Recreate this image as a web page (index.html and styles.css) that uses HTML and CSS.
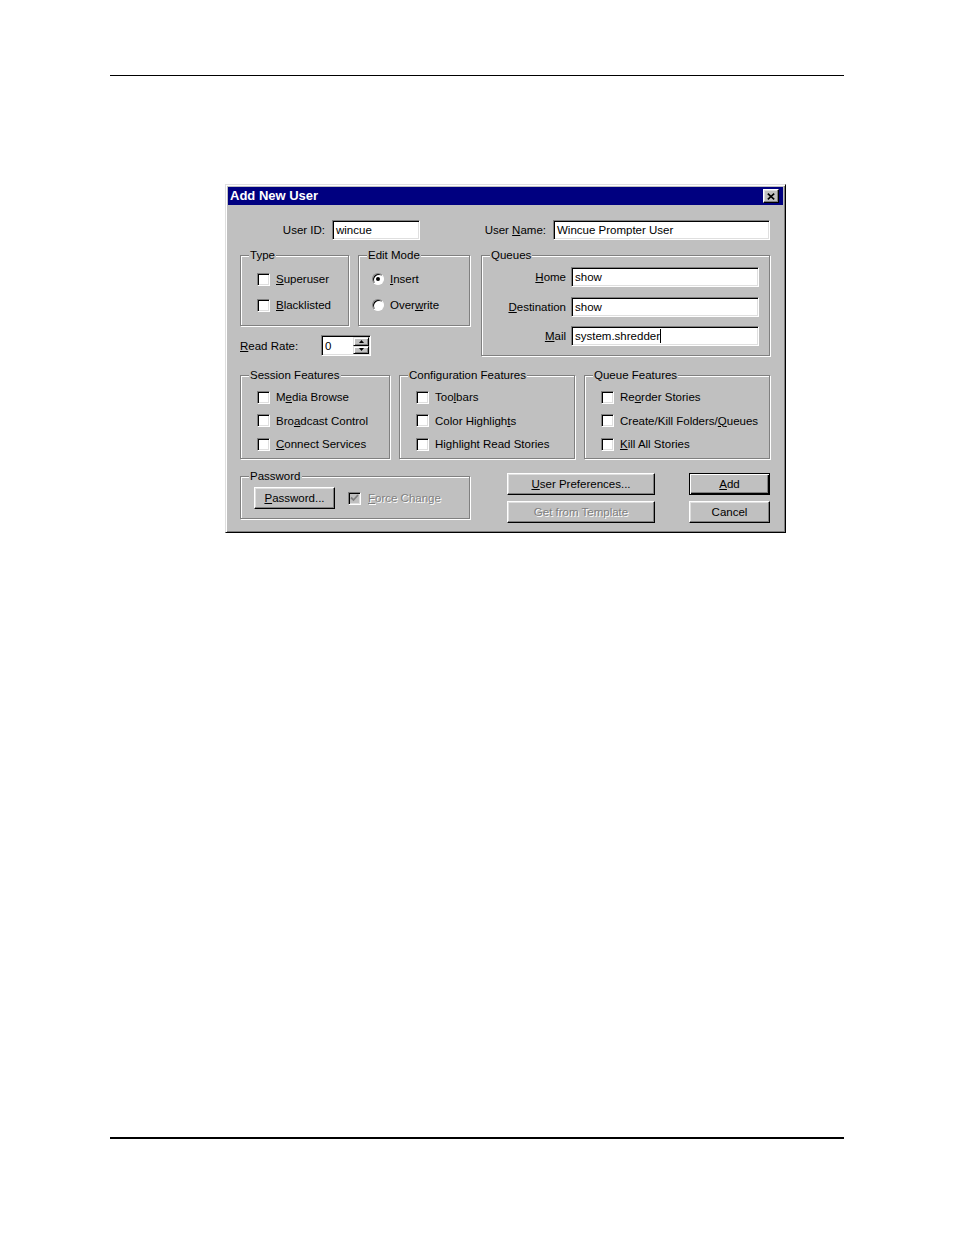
FILE: index.html
```html
<!DOCTYPE html>
<html>
<head>
<meta charset="utf-8">
<title>Add New User</title>
<link rel="stylesheet" href="styles.css">
</head>
<body>
<div class="page">
  <div class="rule-top"></div>

  <div class="dialog">
    <div class="titlebar">
      <span class="title">Add New User</span>
      <span class="close-btn"><svg width="8" height="7" viewBox="0 0 8 7"><path d="M0.8 0.6 L7.2 6.4 M7.2 0.6 L0.8 6.4" stroke="#000" stroke-width="1.6" fill="none"/></svg></span>
    </div>

    <div class="dlg-body">
      <div class="row-ids">
        <span class="lbl lbl-uid">User ID:</span>
        <div class="field f-uid">wincue</div>
        <span class="lbl lbl-uname">User <u>N</u>ame:</span>
        <div class="field f-uname">Wincue Prompter User</div>
      </div>

      <div class="row-mid">
        <div class="mid-left">
          <div class="mid-groups">
            <div class="group g-type">
              <span class="group-title">Type</span>
              <div class="rows rows-type">
                <div class="opt"><span class="chk"></span><span><u>S</u>uperuser</span></div>
                <div class="opt"><span class="chk"></span><span><u>B</u>lacklisted</span></div>
              </div>
            </div>
            <div class="group g-edit">
              <span class="group-title">Edit Mode</span>
              <div class="rows rows-edit">
                <div class="opt"><span class="radio on"><span class="dot"></span></span><span><u>I</u>nsert</span></div>
                <div class="opt"><span class="radio"></span><span>Over<u>w</u>rite</span></div>
              </div>
            </div>
          </div>
          <div class="row-rate">
            <span class="lbl lbl-rate"><u>R</u>ead Rate:</span>
            <div class="spin">
              <div class="spin-val">0</div>
              <div class="spin-btns">
                <span class="spin-btn"><svg width="5" height="3" viewBox="0 0 5 3"><path d="M2.5 0 L5 3 L0 3 Z" fill="#000"/></svg></span>
                <span class="spin-btn"><svg width="5" height="3" viewBox="0 0 5 3"><path d="M0 0 L5 0 L2.5 3 Z" fill="#000"/></svg></span>
              </div>
            </div>
          </div>
        </div>

        <div class="group g-queues">
          <span class="group-title">Queues</span>
          <div class="q-grid">
            <span class="lbl q-lbl"><u>H</u>ome</span>
            <div class="field">show</div>
            <span class="lbl q-lbl"><u>D</u>estination</span>
            <div class="field">show</div>
            <span class="lbl q-lbl"><u>M</u>ail</span>
            <div class="field">system.shredder<span class="caret"></span></div>
          </div>
        </div>
      </div>

      <div class="row-features">
        <div class="group g-feat g-session">
          <span class="group-title">Session Features</span>
          <div class="rows rows-feat">
            <div class="opt"><span class="chk"></span><span>M<u>e</u>dia Browse</span></div>
            <div class="opt"><span class="chk"></span><span>Bro<u>a</u>dcast Control</span></div>
            <div class="opt"><span class="chk"></span><span><u>C</u>onnect Services</span></div>
          </div>
        </div>
        <div class="group g-feat g-config">
          <span class="group-title">Configuration Features</span>
          <div class="rows rows-feat">
            <div class="opt"><span class="chk"></span><span>Too<u>l</u>bars</span></div>
            <div class="opt"><span class="chk"></span><span>Color Highligh<u>t</u>s</span></div>
            <div class="opt"><span class="chk"></span><span>Highlight Read Stories</span></div>
          </div>
        </div>
        <div class="group g-feat g-queuef">
          <span class="group-title">Queue Features</span>
          <div class="rows rows-feat">
            <div class="opt"><span class="chk"></span><span>Re<u>o</u>rder Stories</span></div>
            <div class="opt"><span class="chk"></span><span>Create/Kill Folders/<u>Q</u>ueues</span></div>
            <div class="opt"><span class="chk"></span><span><u>K</u>ill All Stories</span></div>
          </div>
        </div>
      </div>

      <div class="row-bottom">
        <div class="group g-pass">
          <span class="group-title">Password</span>
          <div class="pass-row">
            <span class="btn btn-pass"><u>P</u>assword...</span>
            <div class="opt disabled"><span class="chk chk-dis"><svg width="9" height="8" viewBox="0 0 9 8"><path d="M1 3.5 L3.5 6 L8 1" stroke="#808080" stroke-width="1.8" fill="none"/></svg></span><span class="dis-text"><u>F</u>orce Change</span></div>
          </div>
        </div>
        <div class="btn-col btn-col-wide">
          <span class="btn"><u>U</u>ser Preferences...</span>
          <span class="btn dis-text">Get from Template</span>
        </div>
        <div class="btn-col btn-col-narrow">
          <span class="btn btn-default"><u>A</u>dd</span>
          <span class="btn">Cancel</span>
        </div>
      </div>
    </div>
  </div>

  <div class="rule-bottom"></div>
</div>
</body>
</html>
```

FILE: styles.css
```css
body {
  margin: 0;
  background: #fff;
  font-family: "Liberation Sans", Arial, sans-serif;
}

.page {
  width: 954px;
  height: 1235px;
  padding-top: 75px;
  box-sizing: border-box;
}

.rule-top {
  margin: 0 110px;
  border-top: 1px solid #000;
}

.rule-bottom {
  margin: 604px 110px 0;
  border-top: 2px solid #000;
}

.dialog {
  margin: 108px 0 0 225px;
  width: 561px;
  height: 349px;
  box-sizing: border-box;
  background: #c0c0c0;
  border: 1px solid;
  border-color: #dfdfdf #000 #000 #dfdfdf;
  box-shadow: inset 1px 1px #fff, inset -1px -1px #808080;
  padding: 2px;
  font-size: 11.5px;
  line-height: 14px;
  color: #000;
}

.titlebar {
  height: 18px;
  background: #000080;
  display: flex;
  align-items: center;
  justify-content: space-between;
  padding: 0 4px 0 2px;
}

.title {
  color: #fff;
  font-weight: bold;
  font-size: 13px;
}

.close-btn {
  width: 16px;
  height: 14px;
  box-sizing: border-box;
  background: #c0c0c0;
  border: 1px solid;
  border-color: #fff #000 #000 #fff;
  box-shadow: inset -1px -1px #808080, inset 1px 1px #dfdfdf;
  display: flex;
  align-items: center;
  justify-content: center;
}

.dlg-body {
  padding: 15px 13px 0 12px;
}

u {
  text-decoration: underline;
  text-underline-offset: 1px;
}

/* text fields */
.field {
  height: 20px;
  box-sizing: border-box;
  background: #fff;
  border: 1px solid;
  border-color: #808080 #fff #fff #808080;
  box-shadow: inset 1px 1px #000, inset -1px -1px #dfdfdf;
  padding: 0 3px;
  display: flex;
  align-items: center;
  white-space: nowrap;
}

.caret {
  display: inline-block;
  width: 1px;
  height: 14px;
  background: #000;
  margin-left: 0;
}

.lbl {
  white-space: nowrap;
}

/* row 1 */
.row-ids {
  display: flex;
  align-items: center;
}

.lbl-uid {
  width: 85px;
  text-align: right;
}

.f-uid {
  margin-left: 7px;
  width: 88px;
}

.lbl-uname {
  margin-left: auto;
  margin-right: 7px;
}

.f-uname {
  width: 217px;
}

/* group boxes */
.group {
  box-sizing: border-box;
  border: 1px solid #808080;
  box-shadow: 1px 1px 0 #fff, inset 1px 1px 0 #fff;
}

.group-title {
  display: block;
  width: fit-content;
  margin: -8px 0 0 8px;
  padding: 0 1px;
  background: #c0c0c0;
  line-height: 14px;
  white-space: nowrap;
}

.rows {
  display: flex;
  flex-direction: column;
}

.opt {
  height: 18px;
  display: flex;
  align-items: center;
  white-space: nowrap;
}

.chk {
  width: 13px;
  height: 13px;
  box-sizing: border-box;
  flex: none;
  background: #fff;
  border: 1px solid;
  border-color: #808080 #fff #fff #808080;
  box-shadow: inset 1px 1px #000, inset -1px -1px #dfdfdf;
  margin-right: 6px;
  display: flex;
  align-items: center;
  justify-content: center;
}

.chk-dis {
  background: #c0c0c0;
  margin-right: 7px;
}

.radio {
  width: 12px;
  height: 12px;
  box-sizing: border-box;
  flex: none;
  border-radius: 50%;
  background: #fff;
  border: 1px solid;
  border-color: #808080 #fff #fff #808080;
  box-shadow: inset 1px 1px #000;
  margin-right: 6px;
  display: flex;
  align-items: center;
  justify-content: center;
}

.dot {
  width: 4px;
  height: 4px;
  border-radius: 50%;
  background: #000;
}

/* middle section */
.row-mid {
  display: flex;
  margin-top: 15px;
}

.mid-groups {
  display: flex;
}

.g-type {
  width: 109px;
  height: 71px;
}

.g-edit {
  width: 112px;
  height: 71px;
  margin-left: 9px;
}

.rows-type {
  padding-left: 16px;
  margin-top: 8px;
  gap: 8px;
}

.rows-edit {
  padding-left: 13px;
  margin-top: 8px;
  gap: 8px;
}

.row-rate {
  display: flex;
  align-items: center;
  margin-top: 9px;
}

.lbl-rate {
  width: 81px;
}

.spin {
  width: 50px;
  height: 21px;
  box-sizing: border-box;
  display: flex;
  border: 1px solid;
  border-color: #808080 #fff #fff #808080;
  box-shadow: inset 1px 1px #000, inset -1px -1px #dfdfdf;
  padding: 1px;
  background: #fff;
}

.spin-val {
  flex: 1;
  display: flex;
  align-items: center;
  padding-left: 2px;
}

.spin-btns {
  width: 16px;
  display: flex;
  flex-direction: column;
}

.spin-btn {
  flex: 1;
  box-sizing: border-box;
  background: #c0c0c0;
  border: 1px solid;
  border-color: #dfdfdf #000 #000 #dfdfdf;
  box-shadow: inset 1px 1px #fff, inset -1px -1px #808080;
  display: flex;
  align-items: center;
  justify-content: center;
}

.g-queues {
  width: 289px;
  height: 101px;
  margin-left: 11px;
}

.q-grid {
  display: grid;
  grid-template-columns: 1fr 188px;
  column-gap: 5px;
  row-gap: 9.5px;
  align-items: center;
  margin-top: 5px;
  padding-right: 10px;
}

.q-lbl {
  text-align: right;
}

/* features */
.row-features {
  display: flex;
  margin-top: 19px;
  gap: 9px;
}

.g-feat {
  height: 84px;
}

.g-session { width: 150px; }
.g-config { width: 176px; }
.g-queuef { width: 186px; }

.rows-feat {
  padding-left: 16px;
  margin-top: 6px;
  gap: 5.5px;
}

/* bottom */
.row-bottom {
  display: flex;
  align-items: flex-start;
  margin-top: 14px;
}

.g-pass {
  width: 230px;
  height: 43px;
  margin-top: 3px;
}

.pass-row {
  display: flex;
  align-items: center;
  margin-top: 4px;
  padding-left: 13px;
}

.btn {
  height: 22px;
  box-sizing: border-box;
  background: #c0c0c0;
  border: 1px solid;
  border-color: #fff #000 #000 #fff;
  box-shadow: inset -1px -1px #808080, inset 1px 1px #dfdfdf;
  display: flex;
  align-items: center;
  justify-content: center;
  white-space: nowrap;
}

.btn-pass {
  width: 81px;
  margin-right: 13px;
}

.btn-default {
  border: 1px solid #000;
  box-shadow: inset 1px 1px #fff, inset -1px -1px #000, inset -2px -2px #808080;
}

.btn-col {
  display: flex;
  flex-direction: column;
  gap: 6px;
}

.btn-col-wide {
  width: 148px;
  margin-left: 37px;
}

.btn-col-narrow {
  width: 81px;
  margin-left: 34px;
}

.dis-text {
  color: #808080;
  text-shadow: 1px 1px 0 #fff;
}
```
